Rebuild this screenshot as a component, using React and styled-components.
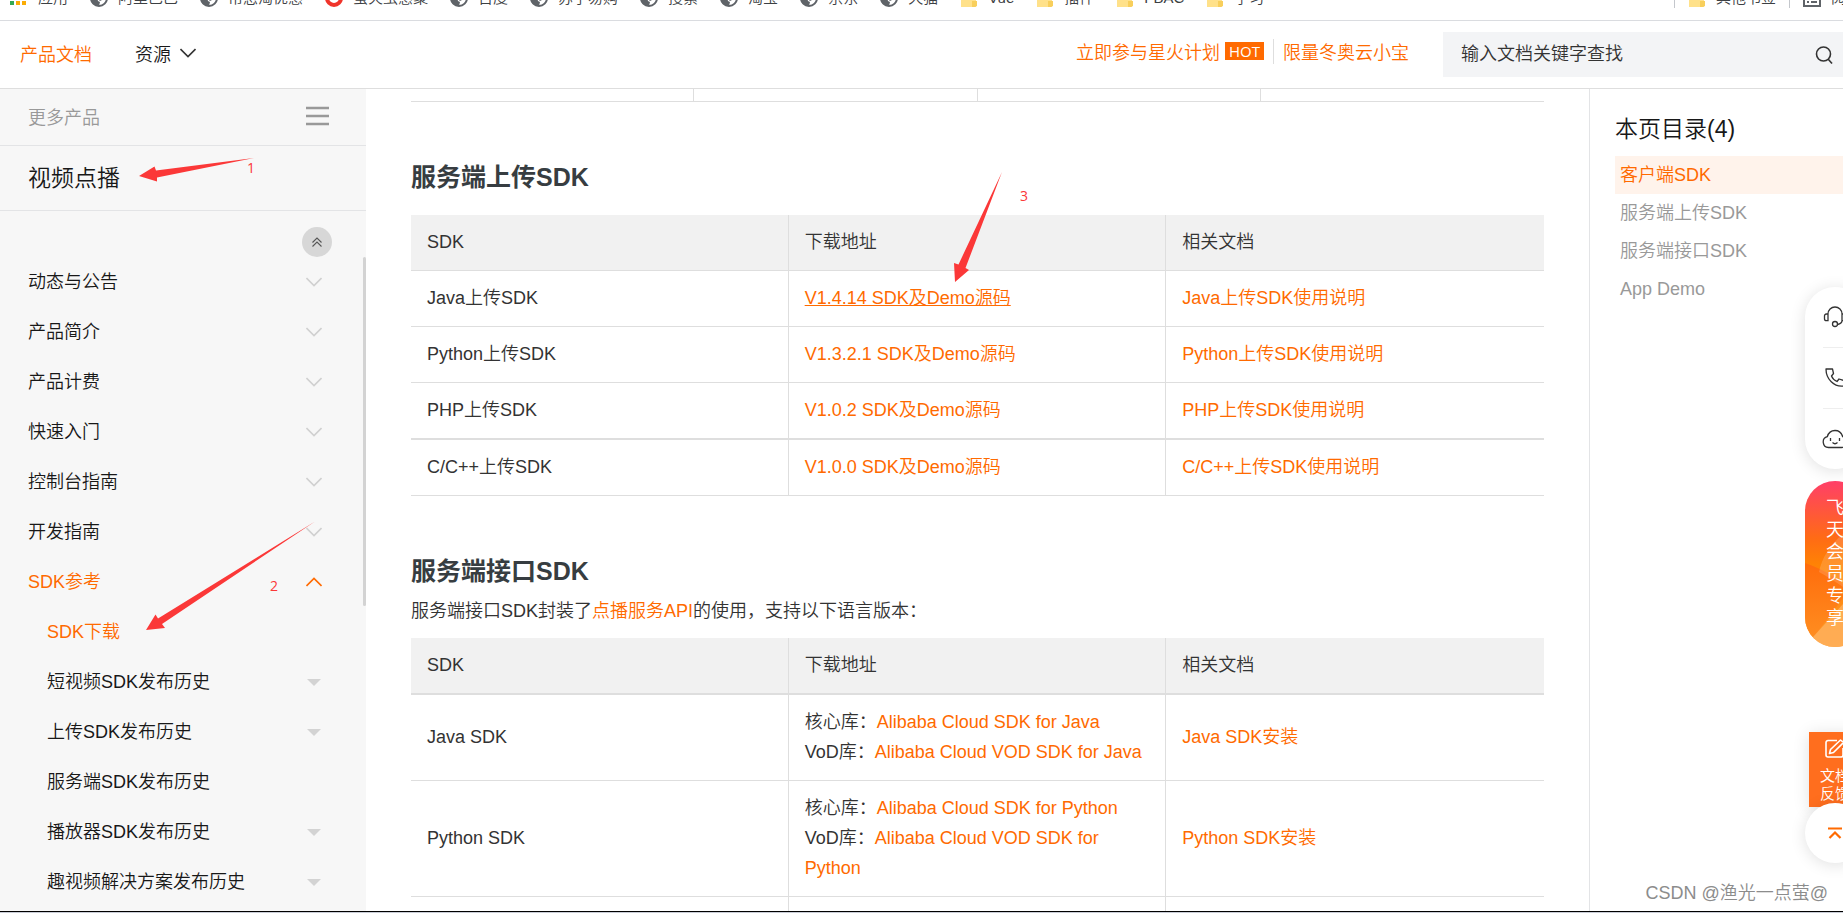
import React from 'react';
import styled, { createGlobalStyle } from 'styled-components';

const BRAND = '#ff6a00';
const LINE = '#dedede';

const GlobalStyle = createGlobalStyle`
  * {
    box-sizing: border-box;
  }

  body {
    margin: 0;
    overflow: hidden;
    background: #fff;
    color: #333;
    font-family: 'Liberation Sans', 'Noto Sans CJK SC', sans-serif;
    font-size: 18px;
    font-weight: 350;
  }

  a {
    color: inherit;
    text-decoration: none;
  }

  button {
    padding: 0;
    border: 0;
    background: none;
    color: inherit;
    font: inherit;
    cursor: pointer;
  }

  svg {
    display: block;
    flex: none;
  }
`;

const Page = styled.div`
  position: relative;
  display: flex;
  flex-direction: column;
  height: 100vh;
  overflow: hidden;
  border-bottom: 1px solid #c8ccd6;
`;

const BookmarkBar = styled.nav`
  display: flex;
  justify-content: space-between;
  align-items: flex-end;
  height: 21px;
  padding: 0 0 12px 10px;
  border-bottom: 1px solid #dadce0;
  overflow: hidden;
  color: #3c4043;
  font-size: 15px;
  line-height: 20px;
  white-space: nowrap;
`;

const BookmarkGroup = styled.div`
  display: flex;
  gap: 22px;
`;

const OtherBookmarks = styled.div`
  display: flex;
  gap: 13px;
  width: 169px;
`;

const Bookmark = styled.a`
  display: flex;
  align-items: center;
  gap: 10px;
`;

const BarDivider = styled.span`
  width: 1px;
  height: 20px;
  flex: none;
  background: #c4c7cc;
`;

const Header = styled.header`
  display: flex;
  align-items: center;
  height: 68px;
  flex: none;
  padding-left: 20px;
  border-bottom: 1px solid ${LINE};
`;

const MainNav = styled.nav`
  display: flex;
  gap: 43px;
  flex: 1;
  padding-bottom: 4px;
`;

const NavLink = styled.a`
  display: flex;
  align-items: center;
  gap: 9px;
  color: ${props => props.$active ? BRAND : '#181818'};
`;

const Promos = styled.div`
  display: flex;
  align-items: center;
  gap: 9px;
  margin-right: 34px;
  padding-bottom: 7px;
  color: ${BRAND};
`;

const PromoLink = styled.a`
  display: flex;
  align-items: center;
  gap: 5px;
`;

const HotTag = styled.span`
  padding: 0 4px;
  background: ${BRAND};
  color: #fff;
  font-family: 'Open Sans', sans-serif;
  font-size: 15px;
  font-weight: 400;
  line-height: 18px;
`;

const PromoDivider = styled.span`
  width: 1px;
  height: 25px;
  background: ${LINE};
`;

const SearchBox = styled.label`
  display: flex;
  align-items: center;
  width: 400px;
  height: 45px;
  padding: 0 10px 0 18px;
  background: #f3f4f6;
`;

const SearchInput = styled.input`
  flex: 1;
  min-width: 0;
  padding: 0;
  border: 0;
  outline: 0;
  background: none;
  color: #333;
  font: inherit;

  &::placeholder {
    color: #333;
    opacity: 1;
  }
`;

const Body = styled.div`
  display: flex;
  flex: 1;
  min-height: 0;
  border-bottom: 1px solid #000;
`;

const Sidebar = styled.aside`
  width: 366px;
  flex: none;
  overflow: hidden;
  background: #f7f7f7;
  color: #181818;
`;

const MoreProducts = styled.div`
  display: flex;
  align-items: center;
  justify-content: space-between;
  height: 57px;
  padding: 0 37px 3px 28px;
  border-bottom: 1px solid #e3e4e6;
  color: #999;
`;

const ProductTitle = styled.h2`
  height: 65px;
  margin: 0;
  padding-left: 28px;
  border-bottom: 1px solid #e3e4e6;
  font-size: 23px;
  font-weight: 350;
  line-height: 64px;
`;

const CollapseButton = styled.button`
  display: flex;
  align-items: center;
  justify-content: center;
  width: 30px;
  height: 30px;
  margin: 16px 34px 0 auto;
  border-radius: 50%;
  background: #d7d7d7;
`;

const MenuWrap = styled.div`
  position: relative;
`;

const Menu = styled.ul`
  margin: 0;
  padding: 0;
  list-style: none;
`;

const MenuItem = styled.a`
  display: flex;
  align-items: center;
  justify-content: space-between;
  height: 50px;
  padding: 0 44px 0 ${props => props.$sub ? '47px' : '28px'};
  color: ${props => props.$active ? BRAND : '#181818'};
  line-height: 24px;
`;

const MenuText = styled.span`
  padding-bottom: 1px;
`;

const ScrollThumb = styled.span`
  position: absolute;
  top: 0;
  right: 0;
  width: 3px;
  height: 349px;
  border-radius: 2px;
  background: #d3d3d3;
`;

const Content = styled.main`
  flex: 1;
  min-width: 0;
  padding: 0 45px;
  overflow: hidden;
`;

const PreviousRow = styled.div`
  display: grid;
  grid-template-columns: repeat(4, 1fr);
  height: 13px;
  border-bottom: 1px solid ${LINE};
`;

const PreviousCell = styled.div`
  border-right: 1px solid ${LINE};

  &:last-child {
    border-right: 0;
  }
`;

const SectionTitle = styled.h2`
  margin: 56px 0 0;
  padding-bottom: 7px;
  color: #373d41;
  font-size: 25px;
  font-weight: 700;
  line-height: 38px;
`;

const Paragraph = styled.p`
  margin: 0;
  line-height: 29px;
`;

const DocTable = styled.table`
  width: 100%;
  margin-top: 12px;
  border-collapse: separate;
  border-spacing: 0;
  table-layout: fixed;
  line-height: 30px;
`;

const Row = styled.tr`
  & > * {
    border-bottom: ${props => props.$thick ? '2px' : '1px'} solid ${LINE};
  }
`;

const cell = `
  padding: 12px 16px 13px;
  border-right: 1px solid ${LINE};
  text-align: left;
  vertical-align: middle;

  &:last-child {
    border-right: 0;
  }
`;

const Th = styled.th`
  ${cell}
  background: #f1f1f1;
  font-weight: 350;
`;

const Td = styled.td`
  ${cell}
`;

const DocLink = styled.a`
  color: ${BRAND};
  text-decoration: ${props => props.$underlined ? 'underline' : 'none'};
`;

const Toc = styled.aside`
  width: 254px;
  flex: none;
  padding: 21px 0 0 25px;
  border-left: 1px solid #e3e4e6;
`;

const TocTitle = styled.h3`
  margin: 0 0 8px;
  color: #181818;
  font-size: 23px;
  font-weight: 350;
  line-height: 38px;
`;

const TocLink = styled.a`
  display: block;
  padding-left: 5px;
  background: ${props => props.$active ? '#fff3eb' : 'none'};
  color: ${props => props.$active ? BRAND : '#999'};
  line-height: 38px;
`;

/* floating tools hang over the right window edge */
const FloatTools = styled.div`
  position: absolute;
  top: 287px;
  right: -22px;
  display: flex;
  flex-direction: column;
  align-items: center;
  width: 60px;
`;

const ContactPanel = styled.div`
  width: 60px;
  border-radius: 30px;
  background: #fff;
  box-shadow: 0 2px 16px rgba(0, 0, 0, 0.12);
`;

const ContactButton = styled.button`
  display: flex;
  align-items: center;
  justify-content: center;
  width: 24px;
  height: 61px;
  margin: 0 auto;
  border-bottom: 1px solid #eee;

  &:last-child {
    height: 60px;
    border-bottom: 0;
  }
`;

const VipLink = styled.a`
  position: relative;
  width: 60px;
  height: 166px;
  margin-top: 12px;
  border-radius: 30px;
  overflow: hidden;
  color: #fff;
`;

const VipArt = styled.svg`
  position: absolute;
  inset: 0;
`;

const VipText = styled.span`
  position: relative;
  display: block;
  width: 18px;
  margin: 16px auto 0;
  line-height: 22px;
  text-align: center;
  word-break: break-all;
`;

const FeedbackButton = styled.button`
  display: flex;
  flex-direction: column;
  align-items: center;
  gap: 9px;
  width: 52px;
  height: 75px;
  margin-top: 85px;
  padding-top: 7px;
  background: #ff6e1e;
  box-shadow: 0 2px 16px rgba(0, 0, 0, 0.12);
  color: #fff;
  font-size: 15px;
  line-height: 18px;
`;

const FeedbackText = styled.span`
  width: 30px;
`;

const BackToTop = styled.button`
  display: flex;
  align-items: center;
  justify-content: center;
  width: 60px;
  height: 60px;
  margin-top: -4px;
  border-radius: 50%;
  background: #fff;
  box-shadow: 0 2px 16px rgba(0, 0, 0, 0.12);
`;

const Watermark = styled.span`
  position: absolute;
  right: 15px;
  bottom: 4px;
  color: #8c8c8c;
  font-size: 18px;
  line-height: 30px;
`;

const Marks = styled.svg`
  position: absolute;
  top: 0;
  left: 0;
  pointer-events: none;
`;

const MarkNumber = styled.span`
  position: absolute;
  left: ${props => props.$x}px;
  top: ${props => props.$y}px;
  color: #fb3838;
  font-family: 'Open Sans', sans-serif;
  font-size: 14px;
  font-weight: 400;
  line-height: 20px;
`;

const bookmarks = [
  ['apps', '应用'],
  ['globe', '阿里巴巴'],
  ['globe', '帮您淘优惠'],
  ['red', '萤火虫惠聚'],
  ['globe', '百度'],
  ['globe', '苏宁易购'],
  ['globe', '搜索'],
  ['globe', '淘宝'],
  ['globe', '京东'],
  ['globe', '天猫'],
  ['folder', 'Vue'],
  ['folder', '插件'],
  ['folder', 'FBAC'],
  ['folder', '学习'],
];

const menu = [
  { text: '动态与公告', icon: 'down' },
  { text: '产品简介', icon: 'down' },
  { text: '产品计费', icon: 'down' },
  { text: '快速入门', icon: 'down' },
  { text: '控制台指南', icon: 'down' },
  { text: '开发指南', icon: 'down' },
  { text: 'SDK参考', icon: 'up', active: true },
  { text: 'SDK下载', sub: true, active: true },
  { text: '短视频SDK发布历史', icon: 'caret', sub: true },
  { text: '上传SDK发布历史', icon: 'caret', sub: true },
  { text: '服务端SDK发布历史', sub: true },
  { text: '播放器SDK发布历史', icon: 'caret', sub: true },
  { text: '趣视频解决方案发布历史', icon: 'caret', sub: true },
];

const uploadSdks = [
  { name: 'Java上传SDK', source: 'V1.4.14 SDK及Demo源码', doc: 'Java上传SDK使用说明', underlined: true },
  { name: 'Python上传SDK', source: 'V1.3.2.1 SDK及Demo源码', doc: 'Python上传SDK使用说明' },
  { name: 'PHP上传SDK', source: 'V1.0.2 SDK及Demo源码', doc: 'PHP上传SDK使用说明', thick: true },
  { name: 'C/C++上传SDK', source: 'V1.0.0 SDK及Demo源码', doc: 'C/C++上传SDK使用说明' },
];

const apiSdks = ['Java', 'Python'];

const toc = ['客户端SDK', '服务端上传SDK', '服务端接口SDK', 'App Demo'];

const BookmarkIcon = ({ type }) => (
  <svg width="18" height="18" viewBox="0 0 18 18">
    {type === 'apps' && (
      <>
        <path d="M0 0h4v4H0zM0 6h4v4H0z" fill="#ea4335" />
        <path d="M6 0h4v4H6zM6 6h4v4H6z" fill="#4285f4" />
        <path d="M0 12h4v4H0z" fill="#34a853" />
        <path d="M6 12h4v4H6zM12 12h4v4h-4z" fill="#fbac05" />
      </>
    )}
    {type === 'globe' && (
      <>
        <circle cx="9" cy="9" r="8" fill="#fff" stroke="#5f6368" strokeWidth="2" />
        <path d="M1 7l6 1 1 4 2 1-1 4C4 17 0 14 1 7zM8 1h6l1 5-3 2v3l-2 1-2-2z" fill="#5f6368" />
      </>
    )}
    {type === 'red' && (
      <>
        <circle cx="9" cy="9" r="7" fill="none" stroke="#f0342b" strokeWidth="4" />
        <path d="M0 9h18" stroke="#f7a19c" strokeWidth="2" />
      </>
    )}
    {type === 'folder' && (
      <>
        <path d="M1 1h7l2 3h6v14H1z" fill="#ffe18a" />
        <path d="M12 12h5v5l-2 1h-3z" fill="#f8cf5c" />
      </>
    )}
    {type === 'list' && (
      <>
        <path d="M1 1h16v16H1z" fill="#fff" stroke="#5f6368" strokeWidth="2" />
        <path d="M4 9h2M8 9h6M4 13h2M8 13h6" stroke="#5f6368" strokeWidth="2" />
      </>
    )}
  </svg>
);

const Chevron = ({ color, up }) => (
  <svg width="16" height="10" viewBox="0 0 16 10" fill="none" stroke={color} strokeWidth="1.6">
    <path d={up ? 'M.5 9L8 1.5 15.5 9' : 'M.5 1L8 8.5 15.5 1'} />
  </svg>
);

const MenuIcon = ({ type }) => {
  if (type === 'caret') {
    return (
      <svg width="16" height="8" viewBox="0 0 16 8">
        <path d="M1 1h14L8 8z" fill="#d3d3d3" />
      </svg>
    );
  }
  if (!type) return null;
  return <Chevron up={type === 'up'} color={type === 'up' ? BRAND : '#d0d0d0'} />;
};

const TableHead = ({ thick }) => (
  <thead>
    <Row $thick={thick}>
      <Th scope="col">SDK</Th>
      <Th scope="col">下载地址</Th>
      <Th scope="col">相关文档</Th>
    </Row>
  </thead>
);

function Bookmarks() {
  return (
    <BookmarkBar>
      <BookmarkGroup>
        {bookmarks.map(([type, text]) => (
          <Bookmark key={text} href="#">
            <BookmarkIcon type={type} />
            {text}
          </Bookmark>
        ))}
      </BookmarkGroup>
      <OtherBookmarks>
        <BarDivider />
        <Bookmark href="#">
          <BookmarkIcon type="folder" />
          其他书签
        </Bookmark>
        <BarDivider />
        <Bookmark href="#">
          <BookmarkIcon type="list" />
          阅读清单
        </Bookmark>
      </OtherBookmarks>
    </BookmarkBar>
  );
}

function TopHeader() {
  return (
    <Header>
      <MainNav>
        <NavLink href="#" $active>产品文档</NavLink>
        <NavLink href="#">
          资源
          <Chevron color="#333" />
        </NavLink>
      </MainNav>
      <Promos>
        <PromoLink href="#">
          立即参与星火计划
          <HotTag>HOT</HotTag>
        </PromoLink>
        <PromoDivider />
        <PromoLink href="#">限量冬奥云小宝</PromoLink>
      </Promos>
      <SearchBox>
        <SearchInput type="text" aria-label="输入文档关键字查找" placeholder="输入文档关键字查找" />
        <svg width="18" height="18" viewBox="0 0 18 18" fill="none" stroke="#333" strokeWidth="1.6">
          <circle cx="8.5" cy="8" r="7" />
          <path d="M13 13l4 4.5" />
        </svg>
      </SearchBox>
    </Header>
  );
}

function ProductMenu() {
  return (
    <Sidebar>
      <MoreProducts>
        更多产品
        <button aria-label="更多产品">
          <svg width="23" height="20" viewBox="0 0 23 20" stroke="#999" strokeWidth="2.5">
            <path d="M0 2h23M0 10h23M0 18h23" />
          </svg>
        </button>
      </MoreProducts>
      <ProductTitle>视频点播</ProductTitle>
      <CollapseButton aria-label="收起">
        <svg width="10" height="10" viewBox="0 0 10 10" fill="none" stroke="#555" strokeWidth="1.1">
          <path d="M.5 5.5L5 1l4.5 4.5M.5 9.5L5 5l4.5 4.5" />
        </svg>
      </CollapseButton>
      <MenuWrap>
        <Menu>
          {menu.map(item => (
            <li key={item.text}>
              <MenuItem href="#" $sub={item.sub} $active={item.active}>
                <MenuText>{item.text}</MenuText>
                <MenuIcon type={item.icon} />
              </MenuItem>
            </li>
          ))}
        </Menu>
        <ScrollThumb />
      </MenuWrap>
    </Sidebar>
  );
}

function Article() {
  return (
    <Content>
      <PreviousRow>
        <PreviousCell />
        <PreviousCell />
        <PreviousCell />
        <PreviousCell />
      </PreviousRow>

      <SectionTitle>服务端上传SDK</SectionTitle>
      <DocTable>
        <TableHead />
        <tbody>
          {uploadSdks.map(sdk => (
            <Row key={sdk.name} $thick={sdk.thick}>
              <Td>{sdk.name}</Td>
              <Td><DocLink href="#" $underlined={sdk.underlined}>{sdk.source}</DocLink></Td>
              <Td><DocLink href="#">{sdk.doc}</DocLink></Td>
            </Row>
          ))}
        </tbody>
      </DocTable>

      <SectionTitle>服务端接口SDK</SectionTitle>
      <Paragraph>
        服务端接口SDK封装了<DocLink href="#">点播服务API</DocLink>的使用，支持以下语言版本：
      </Paragraph>
      <DocTable>
        <TableHead thick />
        <tbody>
          {apiSdks.map(lang => (
            <Row key={lang}>
              <Td>{lang} SDK</Td>
              <Td>
                核心库：<DocLink href="#">Alibaba Cloud SDK for {lang}</DocLink>
                <br />
                VoD库：<DocLink href="#">Alibaba Cloud VOD SDK for {lang}</DocLink>
              </Td>
              <Td><DocLink href="#">{lang} SDK安装</DocLink></Td>
            </Row>
          ))}
          <Row>
            <Td />
            <Td />
            <Td />
          </Row>
        </tbody>
      </DocTable>
    </Content>
  );
}

function SideTools() {
  return (
    <FloatTools>
      <ContactPanel>
        <ContactButton aria-label="客服">
          <svg width="24" height="22" viewBox="0 0 24 22" fill="none" stroke="#333" strokeWidth="1.3">
            <path d="M5 14.5V8a7 7 0 0 1 14 0v6.5c0 2-2 3.5-4.5 4M5 8H3.5C2 8 1.5 9 1.5 10v3c0 1 .5 1.7 2 1.7H5zM19 8h1.5c1.5 0 2 1 2 2v3c0 1-.5 1.7-2 1.7H19z" />
            <circle cx="12" cy="18" r="2.5" />
          </svg>
        </ContactButton>
        <ContactButton aria-label="电话">
          <svg width="20" height="20" viewBox="0 0 20 20" fill="none" stroke="#333" strokeWidth="1.3" strokeLinejoin="round">
            <path d="M1 1h6.5l1 4.5L6.5 8c1 2.5 3 4.5 5.5 5.5l2-2.5 5 1.5v5.5C9 19.5 1 11 1 1z" />
          </svg>
        </ContactButton>
        <ContactButton aria-label="智能助手">
          <svg width="26" height="20" viewBox="0 0 26 20" fill="none" stroke="#333" strokeWidth="1.3">
            <path d="M6.5 18.5a5.5 5.5 0 0 1-1.2-10.8C6.5 3.5 9.5 1.5 13 1.5s6.5 2 7.7 6.2a5.5 5.5 0 0 1-1.2 10.8z" />
            <path d="M8.5 9v3M17.5 9v3M10.5 13.5c1.5 1.5 3.5 1.5 5 0" />
          </svg>
        </ContactButton>
      </ContactPanel>

      <VipLink href="#">
        <VipArt width="60" height="166" viewBox="0 0 60 166">
          <defs>
            <linearGradient id="vip" x1="0" y1="0" x2="0" y2="1">
              <stop offset="0" stopColor="#ff3f68" />
              <stop offset="0.35" stopColor="#ff6c14" />
              <stop offset="0.5" stopColor="#ff8205" />
              <stop offset="1" stopColor="#ff9a2a" />
            </linearGradient>
            <linearGradient id="vipShade" x1="0" y1="0" x2="0" y2="1">
              <stop offset="0" stopColor="#ff6c0c" />
              <stop offset="1" stopColor="#ff8d20" />
            </linearGradient>
          </defs>
          <path d="M0 0h60v166H0z" fill="url(#vip)" />
          <path d="M0 82c18 6 32 15 44 27L8 157 0 150z" fill="url(#vipShade)" />
          <path d="M60 40C32 52 18 72 14 91c14 8 30 18 46 32z" fill="#fff" opacity="0.15" />
          <path d="M8 156l30-33 22-12v55H8z" fill="#ffb25f" opacity="0.8" />
        </VipArt>
        <VipText>飞天会员专享</VipText>
      </VipLink>

      <FeedbackButton>
        <svg width="20" height="19" viewBox="0 0 20 19" fill="none" stroke="#fff" strokeWidth="1.6" strokeLinejoin="round">
          <path d="M12 1.5H3a2 2 0 0 0-2 2V16a2 2 0 0 0 2 2h13a2 2 0 0 0 2-2V9" />
          <path d="M4.5 14.5l1-4L15.5 1l3 2.5-10 10z" />
        </svg>
        <FeedbackText>文档反馈</FeedbackText>
      </FeedbackButton>

      <BackToTop aria-label="返回顶部">
        <svg width="14" height="12" viewBox="0 0 14 12" fill="none" stroke={BRAND} strokeWidth="2.2">
          <path d="M0 1.5h14M1.5 11L7 5.5l5.5 5.5" />
        </svg>
      </BackToTop>
    </FloatTools>
  );
}

function StepMarks() {
  return (
    <>
      <Marks width="1040" height="640" viewBox="0 0 1040 640" fill="#fb3838">
        <path d="M139 176l15.5-9.5 1.5 4L254 158l-97 19.5v4z" />
        <path d="M146 630l9.5-15.5 2.5 4L315 521.5 162 624l3 4z" />
        <path d="M955 282l-1-19 4.5 1.5L1002 172l-36.5 96 3.5 2z" />
      </Marks>
      <MarkNumber $x={247} $y={158}>1</MarkNumber>
      <MarkNumber $x={270} $y={576}>2</MarkNumber>
      <MarkNumber $x={1020} $y={186}>3</MarkNumber>
    </>
  );
}

function App() {
  return (
    <Page>
      <GlobalStyle />
      <Bookmarks />
      <TopHeader />
      <Body>
        <ProductMenu />
        <Article />
        <Toc>
          <TocTitle>本页目录(4)</TocTitle>
          {toc.map((text, i) => (
            <TocLink key={text} href="#" $active={i === 0}>{text}</TocLink>
          ))}
        </Toc>
      </Body>
      <SideTools />
      <StepMarks />
      <Watermark>CSDN @渔光一点萤@</Watermark>
    </Page>
  );
}

export default App;
